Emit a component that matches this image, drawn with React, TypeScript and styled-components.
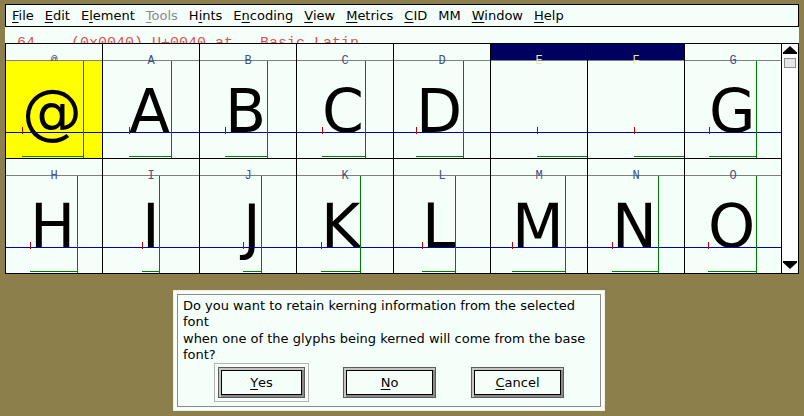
import styled, { createGlobalStyle } from "styled-components";

interface Glyph {
  label: string;
  ch: string;
  origin: number;
  advance: number | null;
  selected?: boolean;
  current?: boolean;
}

const rows: Glyph[][] = [
  [
    { label: "@", ch: "@", origin: 16, advance: 77, current: true },
    { label: "A", ch: "A", origin: 26, advance: 68 },
    { label: "B", ch: "B", origin: 25, advance: 67 },
    { label: "C", ch: "C", origin: 25, advance: 68 },
    { label: "D", ch: "D", origin: 22, advance: 69 },
    { label: "E", ch: "", origin: 46, advance: null, selected: true },
    { label: "F", ch: "", origin: 46, advance: null, selected: true },
    { label: "G", ch: "G", origin: 24, advance: 71 },
  ],
  [
    { label: "H", ch: "H", origin: 24, advance: 71 },
    { label: "I", ch: "I", origin: 39, advance: 56 },
    { label: "J", ch: "J", origin: 43, advance: 61 },
    { label: "K", ch: "K", origin: 24, advance: 63 },
    { label: "L", ch: "L", origin: 28, advance: 61 },
    { label: "M", ch: "M", origin: 21, advance: 74 },
    { label: "N", ch: "N", origin: 24, advance: 70 },
    { label: "O", ch: "O", origin: 23, advance: 71 },
  ],
];

const menus: { pre: string; key: string; post: string; disabled?: boolean }[] = [
  { pre: "", key: "F", post: "ile" },
  { pre: "", key: "E", post: "dit" },
  { pre: "E", key: "l", post: "ement" },
  { pre: "", key: "T", post: "ools", disabled: true },
  { pre: "H", key: "i", post: "nts" },
  { pre: "E", key: "n", post: "coding" },
  { pre: "", key: "V", post: "iew" },
  { pre: "", key: "M", post: "etrics" },
  { pre: "", key: "C", post: "ID" },
  { pre: "MM", key: "", post: "" },
  { pre: "", key: "W", post: "indow" },
  { pre: "", key: "H", post: "elp" },
];

export default function App() {
  return (
    <Desktop>
      <GlobalStyle />
      <FontWindow>
        <MenuBar>
          {menus.map((m) => (
            <MenuItem key={m.pre + m.key + m.post} $disabled={m.disabled}>
              {m.pre}
              {m.key && <Mnemonic>{m.key}</Mnemonic>}
              {m.post}
            </MenuItem>
          ))}
        </MenuBar>
        <InfoLine>{"64    (0x0040) U+0040 at   Basic Latin"}</InfoLine>
        <GridArea>
          <Grid>
            {rows.map((row, ri) =>
              row.map((g) => <GlyphCell key={ri + g.label} glyph={g} />)
            )}
          </Grid>
          <ScrollBar>
            <svg width="16" height="10" viewBox="0 0 16 10">
              <polygon points="8,1 1.5,7 14.5,7" fill="#000" />
              <rect x="1" y="7" width="14" height="2" fill="#000" />
            </svg>
            <Thumb />
            <Spacer />
            <svg width="16" height="10" viewBox="0 0 16 10">
              <rect x="1" y="0" width="14" height="2" fill="#000" />
              <polygon points="1.5,2 14.5,2 8,8" fill="#000" />
            </svg>
          </ScrollBar>
        </GridArea>
      </FontWindow>

      <Dialog>
        <Panel>
          <Message>
            <span>Do you want to retain kerning information from the selected</span>
            <span>font</span>
            <span>when one of the glyphs being kerned will come from the base</span>
            <span>font?</span>
          </Message>
          <Buttons>
            <Slot $default>
              <Button $small>
                <Mnemonic>Y</Mnemonic>es
              </Button>
            </Slot>
            <Slot>
              <Button>
                <Mnemonic>N</Mnemonic>o
              </Button>
            </Slot>
            <Slot>
              <Button>
                <Mnemonic>C</Mnemonic>ancel
              </Button>
            </Slot>
          </Buttons>
        </Panel>
      </Dialog>
    </Desktop>
  );
}

function GlyphCell({ glyph }: { glyph: Glyph }) {
  const end = glyph.advance ?? 96;
  return (
    <Cell>
      <Label $selected={glyph.selected}>{glyph.label}</Label>
      <svg width="96" height="97" style={{ display: "block" }} shapeRendering="crispEdges">
        {glyph.current && <rect x="0" y="0" width="96" height="97" fill="#ffff00" />}
        {glyph.ch && (
          <text
            x={glyph.origin}
            y={71}
            fontFamily="DejaVu Sans"
            fontSize={60}
            fill="#000"
            shapeRendering="auto"
          >
            {glyph.ch}
          </text>
        )}
        <line x1="0" x2="96" y1="71.5" y2="71.5" stroke="#0000a8" strokeWidth="1" />
        <line
          x1={glyph.origin + 0.5}
          x2={glyph.origin + 0.5}
          y1="66"
          y2="73"
          stroke="#c00000"
          strokeWidth="1"
        />
        {glyph.advance !== null && (
          <line
            x1={end + 0.5}
            x2={end + 0.5}
            y1="0"
            y2="97"
            stroke="#008000"
            strokeWidth="1"
          />
        )}
        <line
          x1={glyph.origin}
          x2={end + 1}
          y1="95.5"
          y2="95.5"
          stroke="#008000"
          strokeWidth="1"
        />
      </svg>
    </Cell>
  );
}

const GlobalStyle = createGlobalStyle`
  html, body {
    margin: 0;
    padding: 0;
  }
  body {
    background: #8c7f4c;
    font-family: "DejaVu Sans", sans-serif;
    overflow: hidden;
  }
`;

const Desktop = styled.div`
  position: relative;
  width: 804px;
  height: 416px;
  background: #8c7f4c;
`;

const FontWindow = styled.div`
  position: absolute;
  left: 5px;
  top: 4px;
  width: 794px;
  display: flex;
  flex-direction: column;
  background: #f5fffa;
`;

const MenuBar = styled.div`
  box-sizing: border-box;
  height: 23px;
  border: 1px solid #000;
  display: flex;
  align-items: center;
  gap: 11px;
  padding: 0 6px;
  font-size: 13px;
  line-height: 21px;
  color: #000;
`;

const MenuItem = styled.span<{ $disabled?: boolean }>`
  color: ${(p) => (p.$disabled ? "#8a8a8a" : "#000")};
  white-space: nowrap;
`;

const Mnemonic = styled.span`
  text-decoration: underline;
  text-underline-offset: 2px;
`;

const InfoLine = styled.div`
  box-sizing: border-box;
  height: 16px;
  overflow: hidden;
  padding: 9px 0 0 12px;
  font-family: "Liberation Mono", monospace;
  font-size: 15px;
  line-height: 16px;
  white-space: pre;
  color: #e05050;
`;

const GridArea = styled.div`
  display: flex;
  height: 231px;
`;

const Grid = styled.div`
  display: grid;
  grid-template-columns: repeat(8, 97px);
  grid-auto-rows: 115px;
  border-left: 1px solid #000;
  border-top: 1px solid #000;
`;

const Cell = styled.div`
  width: 96px;
  border-right: 1px solid #000;
  border-bottom: 1px solid #000;
  display: flex;
  flex-direction: column;
`;

const Label = styled.div<{ $selected?: boolean }>`
  box-sizing: border-box;
  height: 17px;
  padding-top: 11px;
  background: ${(p) =>
    p.$selected
      ? "linear-gradient(to top, #808080 1px, #000060 1px)"
      : "linear-gradient(to top, #808080 1px, transparent 1px)"};
  font-family: "Liberation Mono", monospace;
  font-size: 12px;
  line-height: 12px;
  text-align: center;
  color: ${(p) => (p.$selected ? "#e8e8a8" : "#44507a")};
`;

const ScrollBar = styled.div`
  box-sizing: border-box;
  width: 17px;
  height: 231px;
  background: #fff;
  border-top: 1px solid #000;
  border-bottom: 1px solid #000;
  border-right: 1px solid #000;
  display: flex;
  flex-direction: column;
  align-items: flex-start;
  padding-top: 1px;
  padding-bottom: 2px;
`;

const Thumb = styled.div`
  box-sizing: border-box;
  margin: 3px 0 0 2px;
  width: 12px;
  height: 10px;
  background: #e6e6e6;
  border: 1px solid #8e8e8e;
`;

const Spacer = styled.div`
  flex: 1;
`;

const Dialog = styled.div`
  position: absolute;
  left: 173px;
  top: 290px;
  width: 432px;
  box-sizing: border-box;
  padding: 3px;
  background: #f8fdf6;
  border: 1px solid #ecefe4;
`;

const Panel = styled.div`
  border: 1px solid #8a8a8a;
  background: #f5fffa;
  padding: 3px 0 4px 5px;
  display: flex;
  flex-direction: column;
`;

const Message = styled.div`
  display: flex;
  flex-direction: column;
  font-size: 13px;
  line-height: 16.25px;
  color: #000;
  white-space: nowrap;
`;

const Buttons = styled.div`
  display: flex;
  justify-content: center;
  gap: 33px;
  margin-left: -4px;
`;

const Slot = styled.div<{ $default?: boolean }>`
  box-sizing: border-box;
  width: 95px;
  height: 39px;
  display: flex;
  align-items: center;
  justify-content: center;
  border: 1px solid ${(p) => (p.$default ? "#b4b4b4" : "transparent")};
`;

const Button = styled.div<{ $small?: boolean }>`
  box-sizing: border-box;
  width: ${(p) => (p.$small ? "87px" : "95px")};
  height: 31px;
  border: 1px solid #5c5c5c;
  background: #f5fffa;
  box-shadow: inset 2px 2px 0 #c6c6c6, inset -2px -2px 0 #8a8a8a,
    inset 0 0 0 3px #000;
  display: flex;
  align-items: center;
  justify-content: center;
  font-size: 13px;
  line-height: 15px;
  color: #000;
`;
